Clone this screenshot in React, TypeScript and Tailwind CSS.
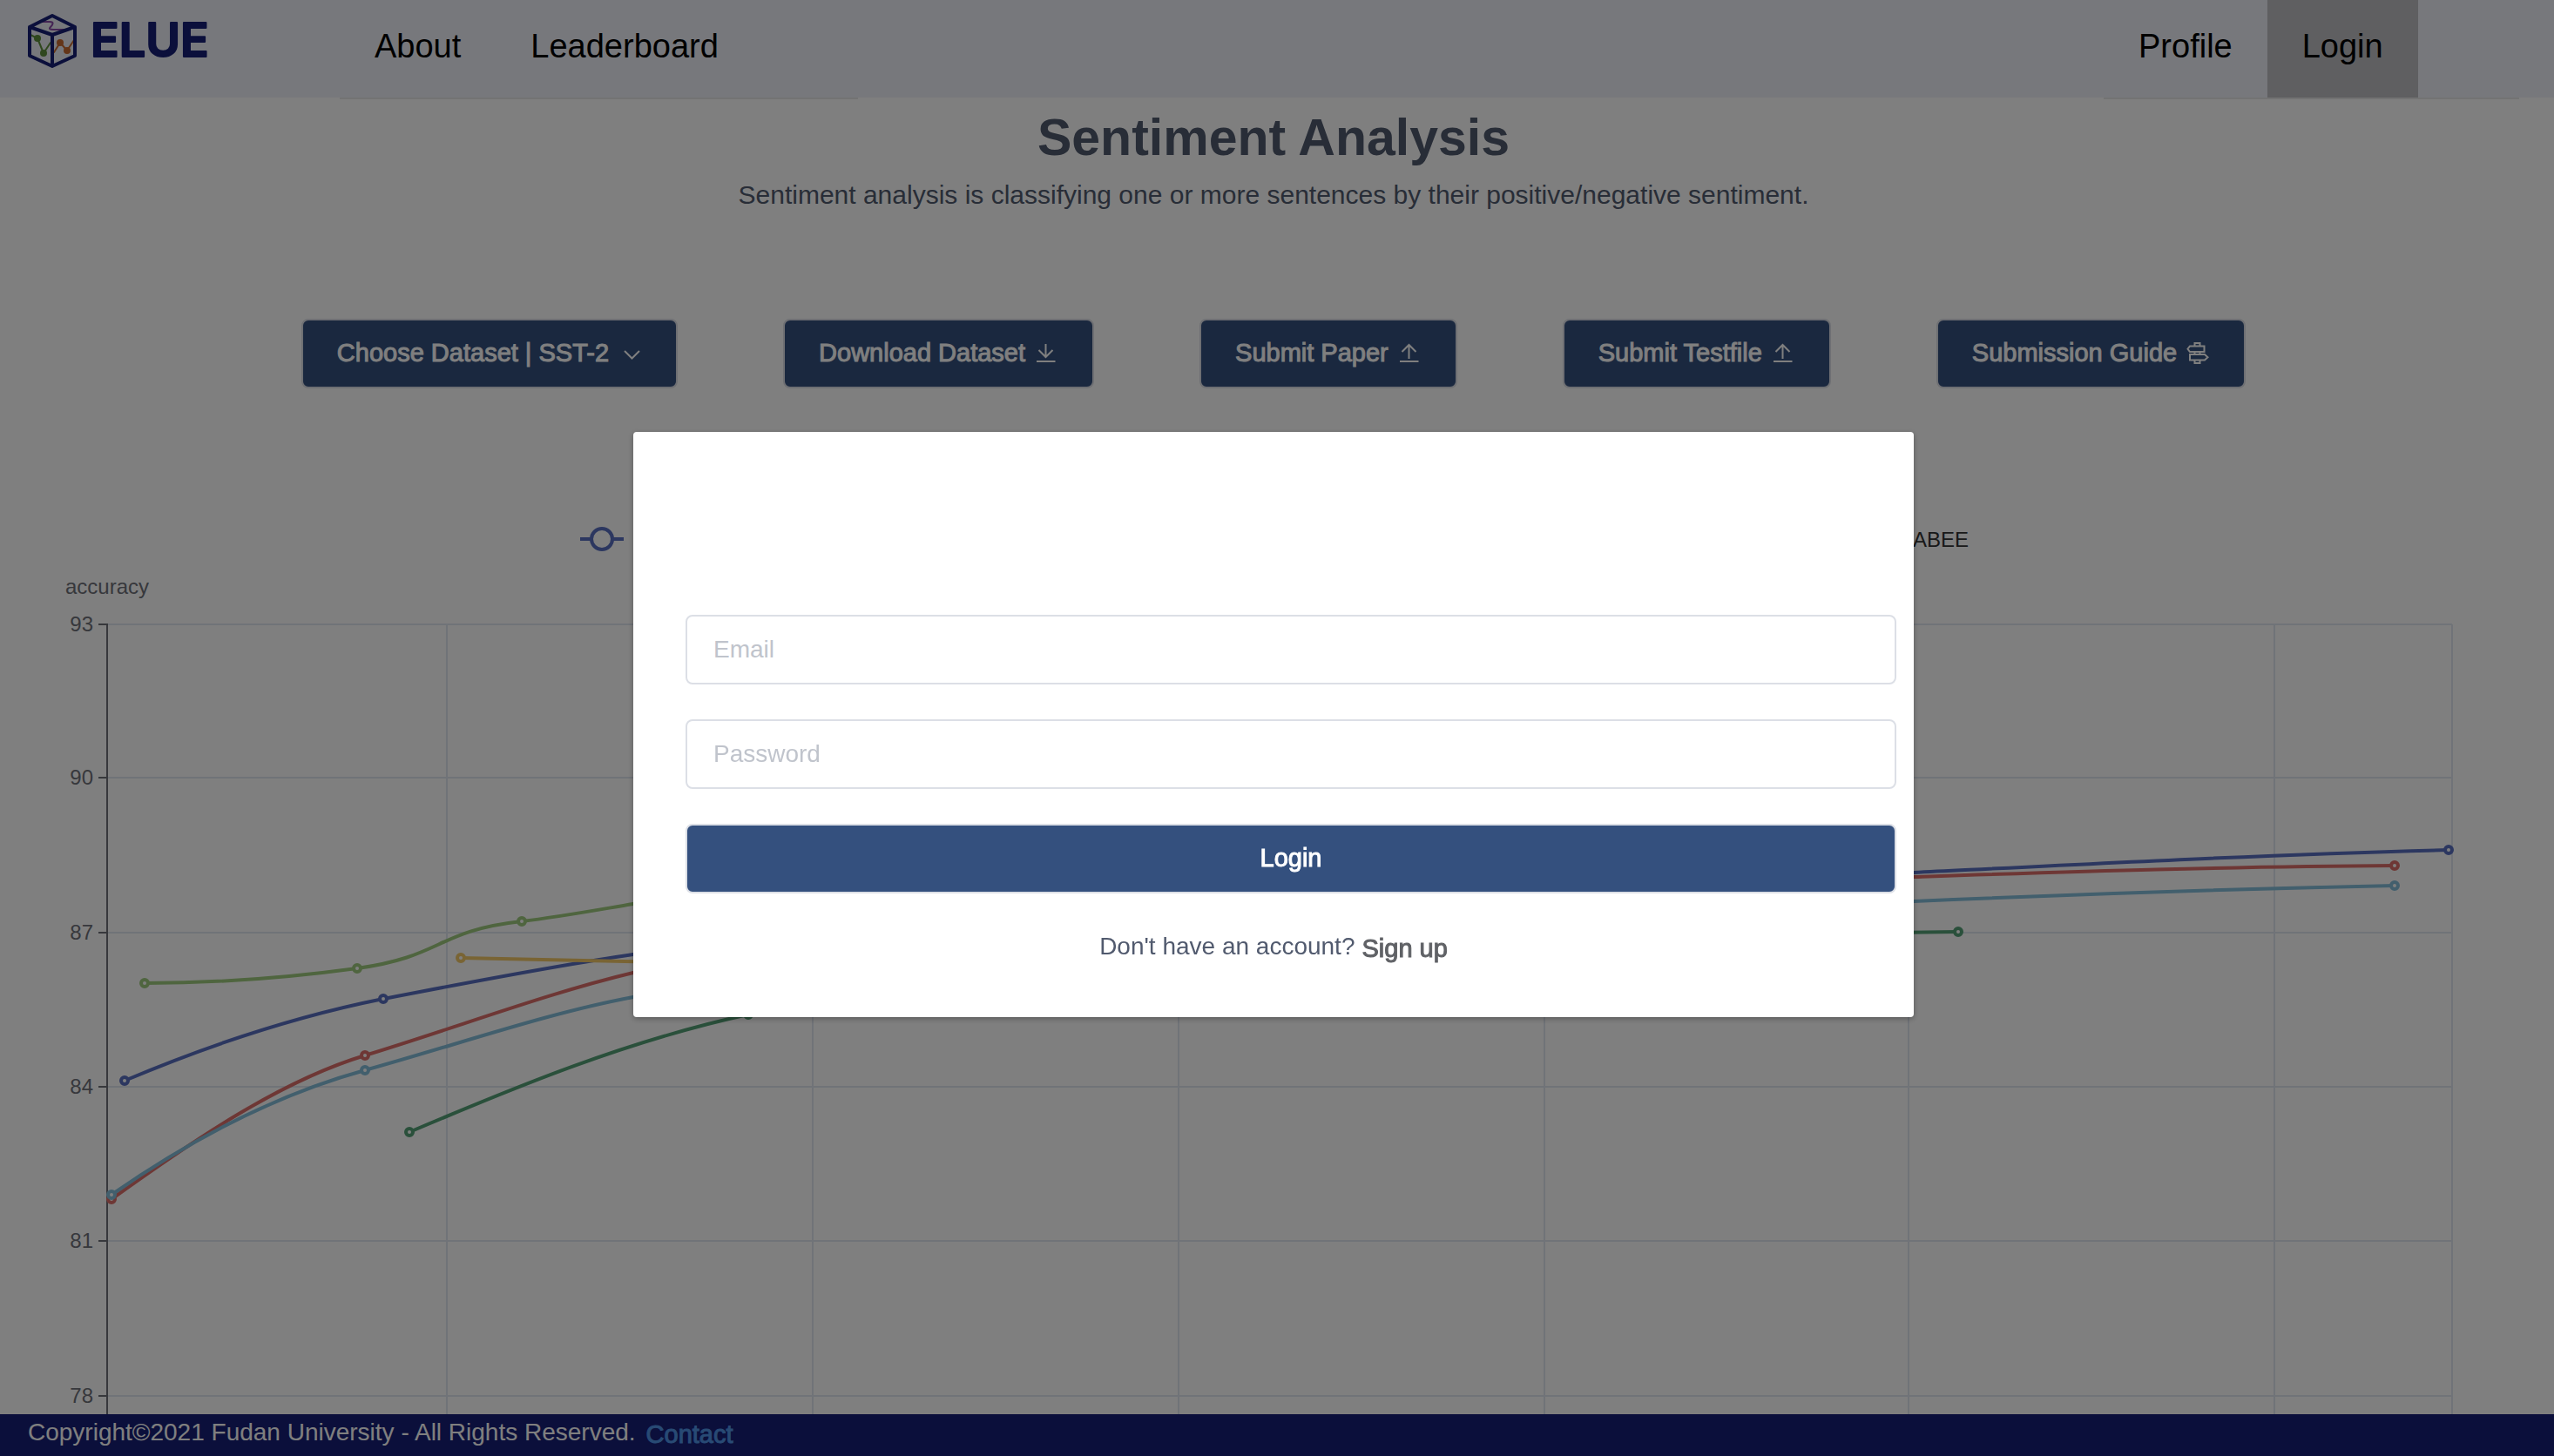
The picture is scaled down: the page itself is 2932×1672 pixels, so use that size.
import type { ReactNode } from "react";

const navItem = "block h-[112px] px-10 text-[38px] leading-[106px] text-black";

function Logo() {
  return (
    <svg viewBox="0 0 260 90" className="h-[90px] w-[260px]" role="img" aria-label="ELUE">
      <g fill="none" strokeLinejoin="round" strokeLinecap="round">
        <path d="M48 25h9c6 0 3 4 1 6s-1 3 3 3h12" stroke="#8a4aa8" strokeWidth="2" />
        <path d="M35 40l8 4 7 17 8-12" stroke="#5f8f3c" strokeWidth="2" />
        <path d="M62 60l7-11 8 9 8-12" stroke="#c96a30" strokeWidth="2" />
        <path d="M60 18L86 31V64L60 76L34 64V31zM34 31L60 40L86 31M60 40V76" stroke="#161e76" strokeWidth="4" />
      </g>
      <g fill="#5f8f3c">
        <circle cx="43" cy="44" r="4" />
        <circle cx="50" cy="61" r="4" />
      </g>
      <g fill="#c96a30">
        <circle cx="69" cy="49" r="4" />
        <circle cx="77" cy="58" r="4" />
      </g>
      <text
        x="104"
        y="65"
        fontFamily="Inter, sans-serif"
        fontWeight="600"
        fontSize="54"
        fill="#161e76"
        stroke="#161e76"
        strokeWidth="2"
        strokeLinejoin="round"
      >
        ELUE
      </text>
    </svg>
  );
}

function Icon({ children }: { children: ReactNode }) {
  return (
    <svg viewBox="0 0 28 28" className="h-7 w-7" fill="none" stroke="currentColor" strokeWidth="2" aria-hidden="true">
      {children}
    </svg>
  );
}

const upload = <path d="M3 23H24.500M13.500 20V4M5.500 12L13.500 4L21.500 12" />;

const actions: { label: string; icon: ReactNode }[] = [
  { label: "Choose Dataset | SST-2", icon: <path d="M8 11L16.500 19.500L25 11" /> },
  { label: "Download Dataset", icon: <path d="M3 23H24.500M13.500 3V18M5.500 10L13.500 18L21.500 10" /> },
  { label: "Submit Paper", icon: upload },
  { label: "Submit Testfile", icon: upload },
  {
    label: "Submission Guide",
    icon: (
      <path d="M10.500 5.500V2h6V5.500M5 5.500H21.500V12H5L2.500 8.750zM10.500 12v3M16.500 12v3M5 15H22l3.500 3.250L22 21.500H5zM10.500 21.500V25h6v-3.500" />
    ),
  },
];

const rows = [
  { y: 717, label: "93" },
  { y: 893, label: "90" },
  { y: 1071, label: "87" },
  { y: 1248, label: "84" },
  { y: 1425, label: "81" },
  { y: 1603, label: "78" },
];
const columns = [513, 933, 1353, 1773, 2191, 2611, 2815];

const series = [
  {
    color: "#596fc0",
    d: "M143 1241C240 1200 340 1167 440 1147C540 1128 630 1110 727 1096C1200 1040 1700 1022 2197 1002C2400 992 2610 981 2811 976",
    points: [[143, 1241], [440, 1147], [2811, 976]],
  },
  {
    color: "#9ecb7e",
    d: "M166 1129C248 1129 329 1123 410 1112C510 1098 500 1069 599 1058C642 1053 685 1045 727 1038L900 1010",
    points: [[166, 1129], [410, 1112], [599, 1058]],
  },
  { color: "#f2c969", d: "M529 1100L900 1108", points: [[529, 1100]] },
  {
    color: "#dd6f6a",
    d: "M128 1377C220 1311 320 1242 419 1212C530 1178 630 1140 727 1117C1200 1040 1700 1022 2197 1007C2380 1001 2560 995 2749 994",
    points: [[128, 1377], [419, 1212], [2749, 994]],
  },
  {
    color: "#84bedb",
    d: "M128 1372C220 1308 320 1256 419 1229C530 1198 630 1163 727 1145C1200 1060 1700 1050 2197 1035C2380 1027 2560 1021 2749 1017",
    points: [[128, 1372], [419, 1229], [2749, 1017]],
  },
  {
    color: "#54a076",
    d: "M470 1300C590 1249 720 1195 859 1165C1300 1090 1800 1075 2248 1070",
    points: [[470, 1300], [859, 1165], [2248, 1070]],
  },
];

function Chart() {
  return (
    <svg
      viewBox="0 446 2932 1226"
      className="block h-auto w-full shrink-0"
      fontFamily="Liberation Sans, Arial, sans-serif"
      fontSize="24"
      role="img"
      aria-label="Accuracy chart"
    >
      <g stroke="#e0e6f1" strokeWidth="2">
        {rows.map((r) => (
          <path key={r.y} d={`M123 ${r.y}H2815`} />
        ))}
        {columns.map((x) => (
          <path key={x} d={`M${x} 717V1672`} />
        ))}
      </g>
      <g stroke="#6e7079" strokeWidth="2">
        <path d="M123 716V1672" />
        {rows.map((r) => (
          <path key={r.y} d={`M113 ${r.y}H123`} />
        ))}
      </g>
      <g fill="#6e7079">
        {rows.map((r) => (
          <text key={r.y} x="107" y={r.y + 8} textAnchor="end">
            {r.label}
          </text>
        ))}
        <text x="75" y="682">
          accuracy
        </text>
      </g>
      {series.map((s) => (
        <path key={s.color} d={s.d} fill="none" stroke={s.color} strokeWidth="4" />
      ))}
      {series.map((s) => (
        <g key={s.color} fill="#fff" stroke={s.color} strokeWidth="4">
          {s.points.map(([x, y]) => (
            <circle key={x} cx={x} cy={y} r="4" />
          ))}
        </g>
      ))}
      <g fill="#fff" stroke="#596fc0" strokeWidth="4">
        <path d="M666 619H716" />
        <circle cx="691" cy="619" r="12" />
      </g>
      <text x="2260" y="628" textAnchor="end" fill="#333">
        ABEE
      </text>
    </svg>
  );
}

function LoginDialog() {
  const field =
    "h-20 w-full rounded-lg border-2 border-[#dcdfe6] bg-white px-[30px] text-[28px] text-[#606266] placeholder:text-[#c0c4cc] outline-none";
  return (
    <div className="fixed inset-0 z-10 flex items-center justify-center bg-black/50 pr-2 pb-2">
      <div role="dialog" aria-modal="true" aria-label="Login" className="w-[1470px] rounded bg-white pt-[210px] pb-[54px] shadow-[0_2px_6px_rgba(0,0,0,0.3)]">
        <form className="flex flex-col gap-10 pr-5 pl-[60px]" onSubmit={(e) => e.preventDefault()}>
          <input type="email" aria-label="Email" placeholder="Email" className={field} />
          <input type="password" aria-label="Password" placeholder="Password" className={field} />
          <button
            type="submit"
            className="h-20 w-full rounded-lg border-2 border-[#dcdfe6] bg-[#34507e] text-[29px] text-white [-webkit-text-stroke:1px_currentColor]"
          >
            Login
          </button>
        </form>
        <p className="mt-9 flex items-end justify-center gap-2 text-[28px] leading-[50px] text-[#515a6e]">
          <span className="pb-[2px]">Don't have an account?</span>
          <a href="#signup" className="text-[29px] text-[#606266] [-webkit-text-stroke:1px_currentColor]">
            Sign up
          </a>
        </p>
      </div>
    </div>
  );
}

export default function App() {
  return (
    <div className="flex h-screen flex-col overflow-hidden bg-white font-['Liberation_Sans',Arial,sans-serif]">
      <header className="flex h-[112px] shrink-0 bg-[#eef0f8] pr-10">
        <a href="#home" className="w-[390px] shrink-0">
          <Logo />
        </a>
        <nav className="flex h-[114px] w-[595px] border-b-2 border-[#e6e6e6]">
          <a href="#about" className={navItem}>
            About
          </a>
          <a href="#leaderboard" className={navItem}>
            Leaderboard
          </a>
        </nav>
        <nav className="ml-auto flex h-[114px] w-[477px] border-b-2 border-[#e6e6e6]">
          <a href="#profile" className={navItem}>
            Profile
          </a>
          <a href="#login" className={`${navItem} bg-[#bebfc3]`}>
            Login
          </a>
        </nav>
      </header>

      <main className="flex min-h-0 flex-1 flex-col overflow-hidden pt-[6px]">
        <div className="flex shrink-0 flex-col items-center pr-2">
          <h1 className="text-[59px] leading-[80px] font-bold text-[#515a6e]">Sentiment Analysis</h1>
          <p className="mt-[6px] text-[30px] leading-10 text-[#515a6e]">
            Sentiment analysis is classifying one or more sentences by their positive/negative sentiment.
          </p>
          <div className="mt-[122px] flex gap-[121px]">
            {actions.map((a) => (
              <button
                key={a.label}
                type="button"
                className="flex h-20 items-center gap-[10px] rounded-lg border-2 border-[#dcdfe6] bg-[#34507e] px-[39px] text-[29px] text-white"
              >
                <span className="[-webkit-text-stroke:1px_currentColor]">{a.label}</span>
                <Icon>{a.icon}</Icon>
              </button>
            ))}
          </div>
        </div>
        <Chart />
      </main>

      <footer className="flex h-12 shrink-0 items-center gap-3 bg-[#161e76] pl-8 text-[28px] leading-[44px] text-white">
        <span className="pb-[6px]">Copyright©2021 Fudan University - All Rights Reserved.</span>
        <a href="#contact" className="pb-[2px] text-[29px] text-[#5095e8] [-webkit-text-stroke:1px_currentColor]">
          Contact
        </a>
      </footer>

      <LoginDialog />
    </div>
  );
}
